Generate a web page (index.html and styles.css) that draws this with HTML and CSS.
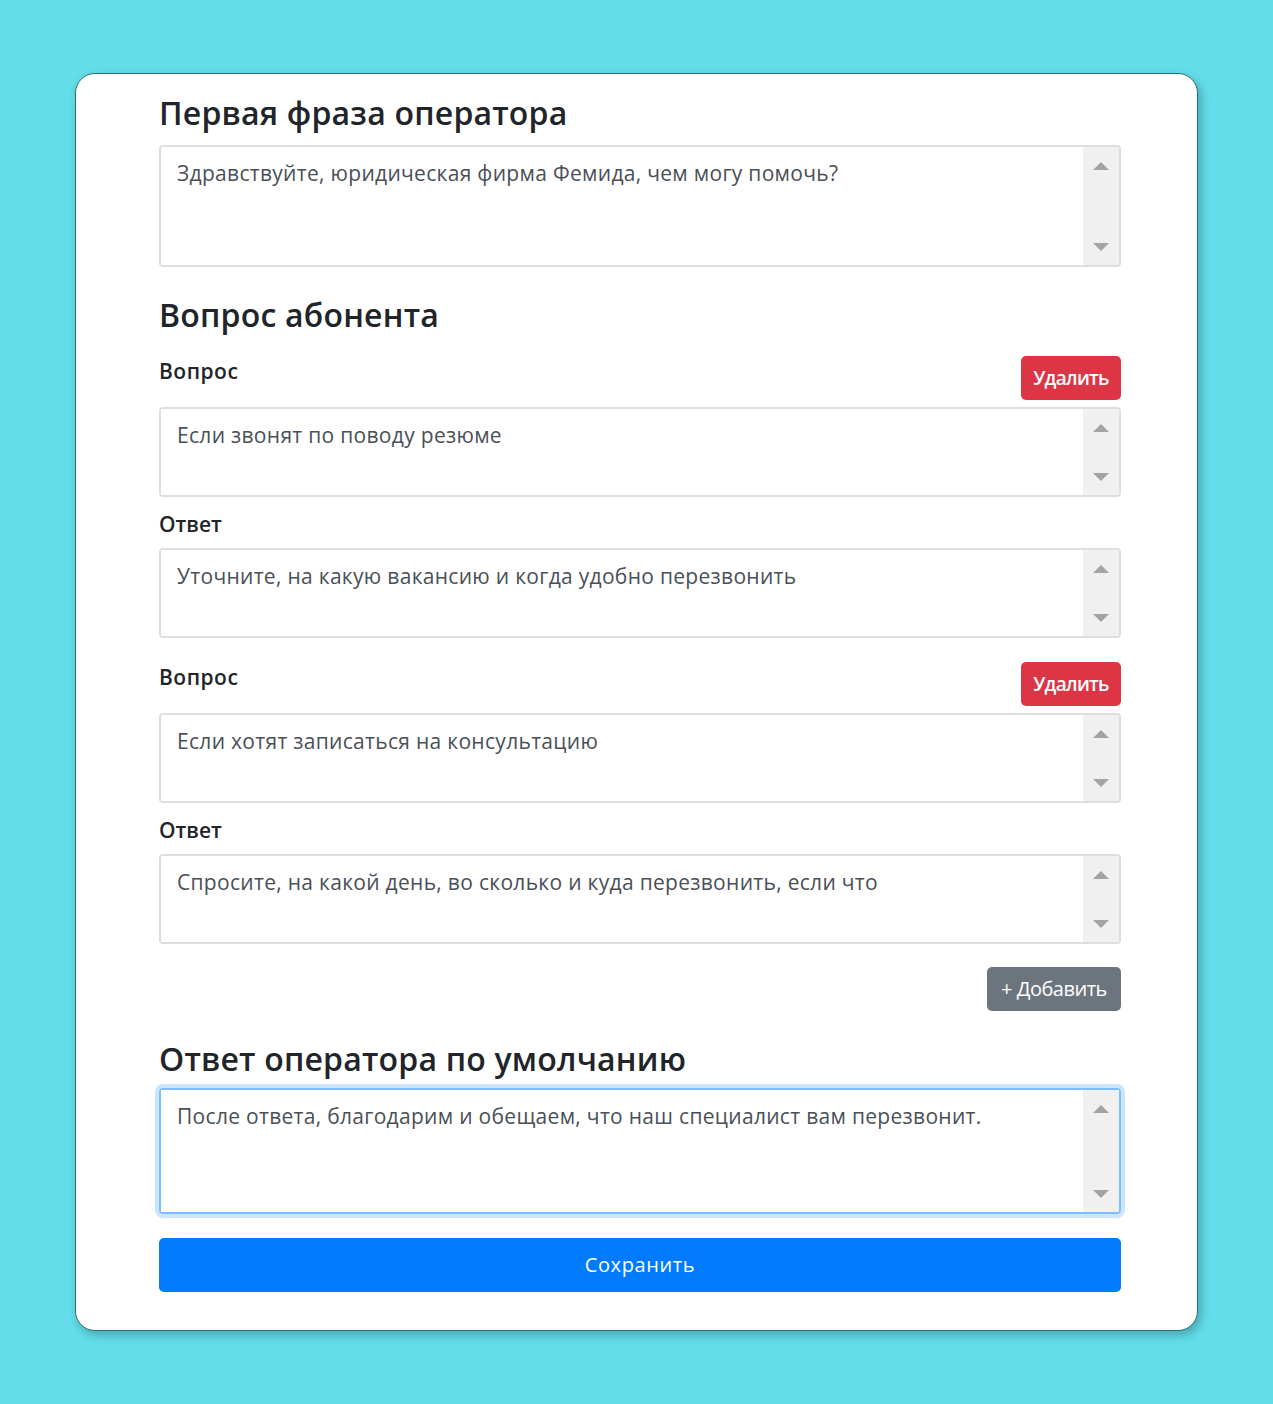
FILE: index.html
```html
<!DOCTYPE html>
<html lang="ru">
<head>
    <meta charset="UTF-8">
    <meta name="viewport" content="width=device-width, initial-scale=1.0">
    <title>Сценарий оператора</title>

    <link rel="stylesheet" href="styles.css">
</head>
<body>
    <div class="card">
        <h2>Первая фраза оператора</h2>
        <div class="field tall">
            <textarea>Здравствуйте, юридическая фирма Фемида, чем могу помочь?</textarea>
            <div class="scrollbar"><span class="arrow up"></span><span class="arrow down"></span></div>
        </div>

        <h2 class="section">Вопрос абонента</h2>

        <div class="qa">
            <div class="label-row">
                <label>Вопрос</label>
                <button class="btn btn-danger">Удалить</button>
            </div>
            <div class="field">
                <textarea>Если звонят по поводу резюме</textarea>
                <div class="scrollbar"><span class="arrow up"></span><span class="arrow down"></span></div>
            </div>
            <label class="answer">Ответ</label>
            <div class="field">
                <textarea>Уточните, на какую вакансию и когда удобно перезвонить</textarea>
                <div class="scrollbar"><span class="arrow up"></span><span class="arrow down"></span></div>
            </div>
        </div>

        <div class="qa">
            <div class="label-row">
                <label>Вопрос</label>
                <button class="btn btn-danger">Удалить</button>
            </div>
            <div class="field">
                <textarea>Если хотят записаться на консультацию</textarea>
                <div class="scrollbar"><span class="arrow up"></span><span class="arrow down"></span></div>
            </div>
            <label class="answer">Ответ</label>
            <div class="field">
                <textarea>Спросите, на какой день, во сколько и куда перезвонить, если что</textarea>
                <div class="scrollbar"><span class="arrow up"></span><span class="arrow down"></span></div>
            </div>
        </div>

        <div class="add-row">
            <button class="btn btn-secondary">+ Добавить</button>
        </div>

        <h2 class="section-default">Ответ оператора по умолчанию</h2>
        <div class="field tall focused">
            <textarea>После ответа, благодарим и обещаем, что наш специалист вам перезвонит.</textarea>
            <div class="scrollbar"><span class="arrow up"></span><span class="arrow down"></span></div>
        </div>

        <button class="btn btn-primary btn-block">Сохранить</button>
    </div>
</body>
</html>
```

FILE: styles.css
```css
/* General */
body {
    margin: 0;
    padding: 73px 0 0 75px;
    background: #62dde9;
    font-family: 'Open Sans', 'Noto Sans', sans-serif;
    color: #212529;
    min-height: 1404px;
    box-sizing: border-box;
}

/* Card */
.card {
    width: 1123px;
    box-sizing: border-box;
    background: #fff;
    border: 1px solid #2f6f77;
    border-radius: 20px;
    box-shadow: 3px 4px 10px rgba(0, 0, 0, 0.25);
    padding: 21px 76px 38px 83px;
}

/* Headings */
h2 {
    font-size: 32px;
    font-weight: 600;
    line-height: 36px;
    margin: 0 0 14px;
    letter-spacing: 0.2px;
}

.section {
    margin: 30px 0 23px;
}

.section-default {
    margin: 30px 0 11px;
}

/* Labels */
label {
    display: block;
    font-size: 21px;
    font-weight: 600;
    line-height: 30px;
    letter-spacing: 0.5px;
}

.label-row {
    display: flex;
    justify-content: space-between;
    align-items: flex-start;
    margin-bottom: 7px;
}

.answer {
    margin: 12px 0 9px;
    letter-spacing: 0;
}

.qa + .qa {
    margin-top: 24px;
}

/* Textarea with scrollbar */
.field {
    display: flex;
    height: 90px;
    box-sizing: border-box;
    border: 2px solid #dcdfe2;
    border-radius: 4px;
    overflow: hidden;
}

.field.tall {
    height: 122px;
}

.field.focused {
    height: 126px;
    border-color: #80bdff;
    box-shadow: 0 0 0 4px rgba(0, 123, 255, 0.2);
    overflow: visible;
}

.field textarea {
    flex: 1;
    border: none;
    outline: none;
    resize: none;
    padding: 11px 16px;
    font-family: inherit;
    font-size: 21px;
    line-height: 30px;
    color: #495057;
    letter-spacing: 0.3px;
    overflow: hidden;
    background: #fff;
}

.scrollbar {
    width: 36px;
    background: #f0f0f0;
    display: flex;
    flex-direction: column;
    justify-content: space-between;
    align-items: center;
    padding: 15px 0 14px;
}

.arrow {
    width: 0;
    height: 0;
    border-left: 8px solid transparent;
    border-right: 8px solid transparent;
}

.arrow.up {
    border-bottom: 8px solid #a3a3a3;
}

.arrow.down {
    border-top: 8px solid #a3a3a3;
}

/* Buttons */
.btn {
    font-family: inherit;
    font-size: 20px;
    line-height: 30px;
    font-weight: 500;
    letter-spacing: -0.5px;
    color: #fff;
    border: none;
    border-radius: 5px;
    padding: 7px 14px;
    cursor: pointer;
}

.btn-danger {
    background: #dc3545;
    width: 100px;
    padding: 7px 0;
    font-size: 19px;
    font-weight: 600;
    letter-spacing: -0.7px;
}

.btn-secondary {
    background: #6c757d;
    width: 134px;
    padding: 7px 0;
}

.btn-primary {
    background: #007bff;
}

.btn-block {
    display: block;
    width: 100%;
    height: 54px;
    margin-top: 24px;
    font-weight: 400;
    letter-spacing: 0.6px;
}

.add-row {
    display: flex;
    justify-content: flex-end;
    margin-top: 23px;
}
```
